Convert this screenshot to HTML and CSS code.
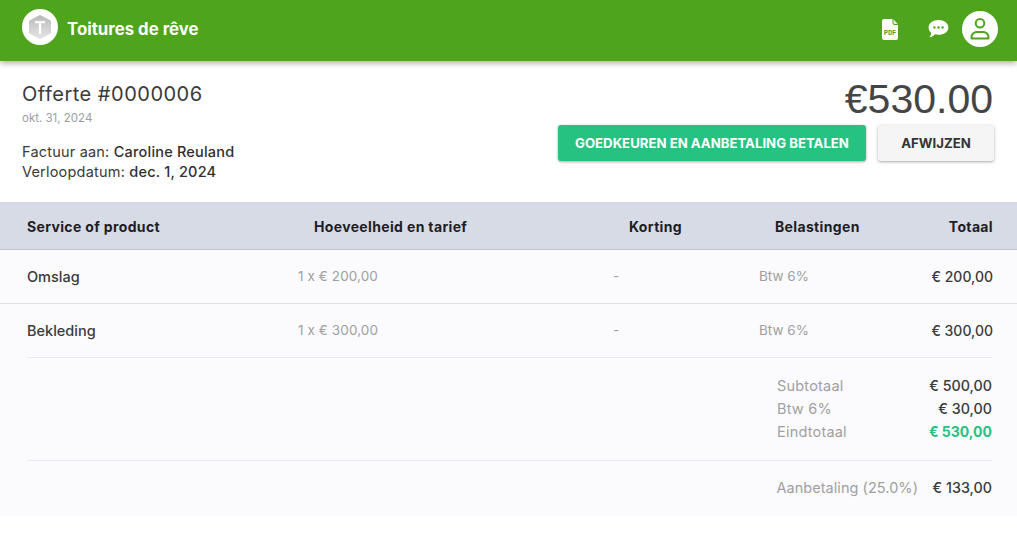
FILE: index.html
```html
<!DOCTYPE HTML>
<html>
<head>
    <title>Offerte #0000006</title>
    <meta charset="utf-8" />
    <link rel="stylesheet" href="styles.css">
</head>
<body>
    <header id="topbar">
        <div class="brand">
            <span class="brand-logo">
                <svg viewBox="0 0 36 36" width="36" height="36">
                    <defs>
                        <linearGradient id="hex" x1="0" y1="0" x2="0" y2="1">
                            <stop offset="0" stop-color="#bcbcbc"/>
                            <stop offset="1" stop-color="#e2e2e2"/>
                        </linearGradient>
                    </defs>
                    <circle cx="18" cy="18" r="18" fill="#fff"/>
                    <path d="M18 7.500L27.500 12.500V23.500L18 28.500L8.500 23.500V12.500z" fill="url(#hex)" stroke="url(#hex)" stroke-width="3" stroke-linejoin="round"/>
                    <path d="M13 12h10v2.200h-3.800V25h-2.400V14.200H13z" fill="#fff"/>
                </svg>
            </span>
            <span class="brand-name">Toitures de rêve</span>
        </div>
        <div class="top-actions">
            <svg class="icon" viewBox="0 0 16 21" width="16" height="21">
                <path d="M2 0h8.500v4q0 2 2 2H16v13q0 2-2 2H2q-2 0-2-2V2q0-2 2-2z" fill="#fff"/>
                <path d="M11.500 .3L15.700 5h-3q-1.200 0-1.200-1.200z" fill="#e6f0de"/>
                <text x="8" y="15.500" class="pdf-label">PDF</text>
            </svg>
            <svg class="icon chat" viewBox="0 0 22 20" width="21" height="18">
                <path d="M11 0c6 0 11 3.400 11 8.200s-5 8.200-11 8.200c-1.300 0-2.600-.2-3.800-.5C5.600 17.500 3.200 19 .8 19.300c1.400-1.300 2-3.200 2.100-5C1.100 12.800 0 10.600 0 8.200 0 3.400 5 0 11 0z" fill="#fff"/>
                <circle cx="6.500" cy="8.300" r="1.300" fill="#4ea41d"/>
                <circle cx="11" cy="8.300" r="1.300" fill="#4ea41d"/>
                <circle cx="15.500" cy="8.300" r="1.300" fill="#4ea41d"/>
            </svg>
            <span class="avatar">
                <svg viewBox="0 0 24 24" width="24" height="24" fill="none" stroke="#4ea41d" stroke-width="2" stroke-linejoin="round">
                    <circle cx="12" cy="6.300" r="4.300"/>
                    <path d="M3.500 21.500V20c0-2.500 2.500-5 5-5h7c2.500 0 5 2.500 5 5v1.500z"/>
                </svg>
            </span>
        </div>
    </header>

    <section id="summary">
        <div class="summary-left">
            <h1>Offerte #0000006</h1>
            <p class="quote-date">okt. 31, 2024</p>
            <p class="meta">Factuur aan: <strong>Caroline Reuland</strong></p>
            <p class="meta">Verloopdatum: <strong>dec. 1, 2024</strong></p>
        </div>
        <div class="summary-right">
            <div class="amount">€530.00</div>
            <div class="buttons">
                <button class="btn btn-approve">GOEDKEUREN EN AANBETALING BETALEN</button>
                <button class="btn btn-reject">AFWIJZEN</button>
            </div>
        </div>
    </section>

    <section id="lines">
        <div class="row row-head">
            <div class="col-name">Service of product</div>
            <div class="col-qty">Hoeveelheid en tarief</div>
            <div class="col-disc">Korting</div>
            <div class="col-tax">Belastingen</div>
            <div class="col-total">Totaal</div>
        </div>
        <div class="row row-item">
            <div class="col-name">Omslag</div>
            <div class="col-qty">1 x € 200,00</div>
            <div class="col-disc">-</div>
            <div class="col-tax">Btw 6%</div>
            <div class="col-total">€ 200,00</div>
        </div>
        <div class="row row-item">
            <div class="col-name">Bekleding</div>
            <div class="col-qty">1 x € 300,00</div>
            <div class="col-disc">-</div>
            <div class="col-tax">Btw 6%</div>
            <div class="col-total">€ 300,00</div>
        </div>

        <div class="totals">
            <div class="totals-block">
                <div class="total-line"><span>Subtotaal</span><b>€ 500,00</b></div>
                <div class="total-line"><span>Btw 6%</span><b>€ 30,00</b></div>
                <div class="total-line"><span>Eindtotaal</span><b class="grand">€ 530,00</b></div>
            </div>
            <div class="deposit">
                <span>Aanbetaling (25.0%)</span><b>€ 133,00</b>
            </div>
        </div>
    </section>
</body>
</html>
```

FILE: styles.css
```css
html, body, div, span, h1, p, section, header { margin: 0; padding: 0; border: 0; }
html { box-sizing: border-box; }
*, *:before, *:after { box-sizing: inherit; }

body {
    background-color: #ffffff;
    color: #3a3a3a;
    font-family: "Inter", "Noto Sans", sans-serif;
    font-size: 14px;
    overflow: hidden;
}

/* Top bar */
#topbar {
    display: flex;
    align-items: center;
    justify-content: space-between;
    height: 61px;
    padding: 0 19px 0 22px;
    background-color: #4ea41d;
    box-shadow: 0 2px 6px rgba(0, 0, 0, 0.35);
}

.brand { display: flex; align-items: center; gap: 9px; padding-bottom: 7px; }
.brand-logo { display: block; height: 36px; }
.brand-name { margin-top: 3px; color: #fff; font-size: 16.8px; font-weight: 700; }

.top-actions { display: flex; align-items: center; padding-bottom: 3px; }
.top-actions .icon { display: block; }
.top-actions .chat { margin-left: 30px; margin-right: 13px; }
.pdf-label { fill: #4ea41d; font-family: "Liberation Mono", monospace; font-size: 7px; font-weight: 700; text-anchor: middle; }

.avatar {
    display: flex;
    align-items: center;
    justify-content: center;
    width: 36px;
    height: 36px;
    border-radius: 50%;
    background-color: #fff;
}

/* Summary */
#summary {
    display: flex;
    justify-content: space-between;
    height: 141px;
    padding: 20px 23px 0 22px;
}

h1 { font-size: 20px; font-weight: 400; line-height: 26px; letter-spacing: 0.5px; }
.quote-date { margin: 3px 0 16px; font-size: 11.5px; line-height: 16px; color: #9e9e9e; }
.meta { font-size: 14.5px; line-height: 20px; letter-spacing: 0.2px; }
.meta strong { font-weight: 500; color: #2f2f2f; }

.summary-right { display: flex; flex-direction: column; align-items: flex-end; }
.amount { margin-right: 1px; font-family: "Liberation Sans", sans-serif; font-size: 41px; line-height: 36px; color: #454545; }
.buttons { display: flex; gap: 12px; margin-top: 8px; }

.btn {
    height: 36px;
    border: 0;
    border-radius: 3px;
    font-family: "Inter", sans-serif;
    font-size: 13.2px;
    font-weight: 700;
    box-shadow: 0 1px 3px rgba(0, 0, 0, 0.35);
}
.btn-approve { width: 308px; background-color: #26c281; color: #fff; }
.btn-reject { width: 116px; background-color: #f5f5f5; color: #333; }

/* Lines table */
#lines { background-color: #fbfbfe; height: 314px; }

.row { display: grid; grid-template-columns: 270px 316px 146px 110px 1fr; align-items: center; padding: 0 24px 0 27px; }
.row-head { height: 48px; padding-top: 1px; background-color: #d7dbe6; border-bottom: 1px solid #c0c4d0; font-size: 14px; font-weight: 700; letter-spacing: 0.35px; color: #1e1e24; }
.row-head .col-qty, .row-head .col-disc, .row-head .col-tax { padding-left: 16px; }
.row-head .col-qty { padding-left: 17px; }
.row-item { height: 54px; padding-bottom: 1px; border-bottom: 1px solid #e0e1e6; font-size: 14px; }
.row-item:nth-child(3) { height: 53px; border-bottom: 0; }
.row-item .col-name { font-size: 14.5px; font-weight: 500; }
.row-item .col-qty, .row-item .col-disc, .row-item .col-tax { font-size: 13.5px; color: #a0a0a0; }
.row-item .col-qty { padding-left: 1px; letter-spacing: 0.1px; }
.row-item .col-total { font-weight: 500; }
.col-total { text-align: right; }

.totals { margin: 0 25px 0 27px; }
.totals-block { padding: 16px 0 17px; border-bottom: 1px solid #e8e9f2; border-top: 1px solid #e8e9f2; }
.total-line { display: flex; justify-content: flex-end; line-height: 23px; }
.total-line span { width: 140px; font-size: 14.5px; letter-spacing: 0.2px; color: #a0a0a0; }
.total-line b { width: 75px; font-size: 14.3px; text-align: right; font-weight: 500; }
.total-line b.grand { color: #26c281; font-size: 14px; font-weight: 700; }
.deposit { display: flex; justify-content: flex-end; padding-top: 17px; line-height: 20px; }
.deposit span { font-size: 14.5px; letter-spacing: 0.05px; color: #a0a0a0; }
.deposit b { width: 74px; font-size: 14.3px; text-align: right; font-weight: 500; }
```
